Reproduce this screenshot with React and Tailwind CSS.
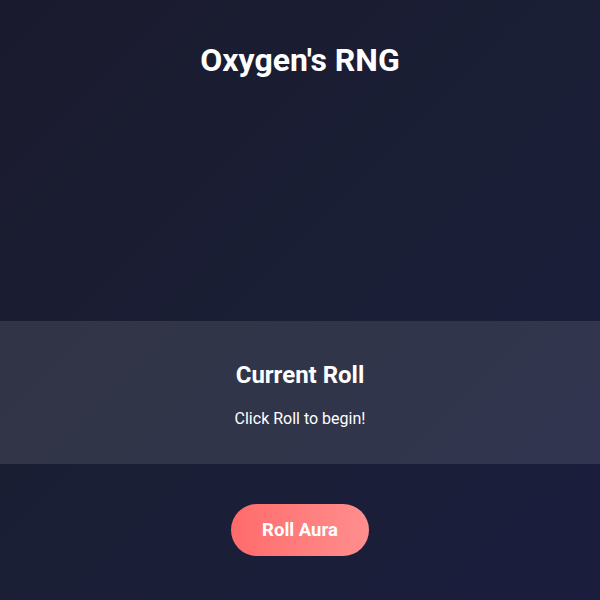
export default function App() {
  return (
    <div
      className="min-h-screen w-full bg-gradient-to-br from-[#1a1a2e] via-[#1a1f35] to-[#1a1d3d] text-white flex flex-col items-center"
      style={{ fontFamily: 'Roboto, "Noto Sans", sans-serif' }}
    >
      <h1 className="mt-[41px] text-[32px] leading-[38px] font-bold">Oxygen's RNG</h1>

      <div className="h-[242px]" />

      <div className="w-full bg-white/10 py-[20px] flex flex-col items-center">
        <h2 className="mt-[20px] text-[24px] leading-[28px] font-bold">Current Roll</h2>
        <p className="mt-[20px] mb-[16px] text-[16px] leading-[19px]">Click Roll to begin!</p>
      </div>

      <button className="mt-[40px] px-[31px] py-[15px] rounded-full bg-gradient-to-r from-[#ff6b6b] to-[#ff8e8e] text-[18.5px] leading-[22px] font-bold text-white">
        Roll Aura
      </button>
    </div>
  );
}
